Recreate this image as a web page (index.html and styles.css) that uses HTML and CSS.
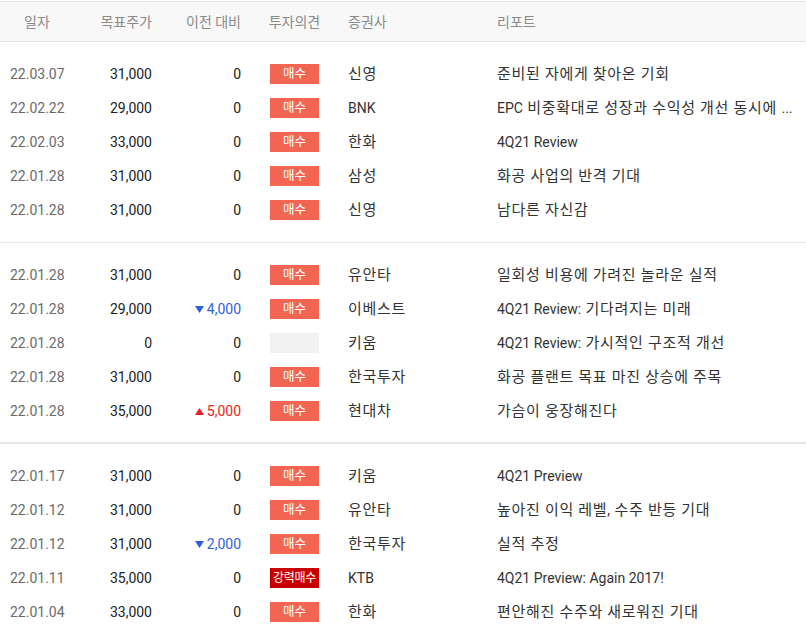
FILE: index.html
```html
<!DOCTYPE html>
<html lang="ko">
<head>
<meta charset="utf-8">
<title>리포트</title>
<link rel="stylesheet" href="styles.css">
</head>
<body>
<div class="table">
  <div class="head row">
    <div class="c date">일자</div>
    <div class="c num">목표주가</div>
    <div class="c num">이전 대비</div>
    <div class="c op"><span class="op-h">투자의견</span></div>
    <div class="c broker">증권사</div>
    <div class="c report">리포트</div>
  </div>

  <div class="group">
    <div class="row"><div class="c date">22.03.07</div><div class="c num">31,000</div><div class="c num">0</div><div class="c op"><span class="badge">매수</span></div><div class="c broker">신영</div><div class="c report">준비된 자에게 찾아온 기회</div></div>
    <div class="row"><div class="c date">22.02.22</div><div class="c num">29,000</div><div class="c num">0</div><div class="c op"><span class="badge">매수</span></div><div class="c broker"><span class="en">BNK</span></div><div class="c report"><span class="en">EPC</span> 비중확대로 성장과 수익성 개선 동시에 <span class="en">...</span></div></div>
    <div class="row"><div class="c date">22.02.03</div><div class="c num">33,000</div><div class="c num">0</div><div class="c op"><span class="badge">매수</span></div><div class="c broker">한화</div><div class="c report"><span class="en">4Q21 Review</span></div></div>
    <div class="row"><div class="c date">22.01.28</div><div class="c num">31,000</div><div class="c num">0</div><div class="c op"><span class="badge">매수</span></div><div class="c broker">삼성</div><div class="c report">화공 사업의 반격 기대</div></div>
    <div class="row"><div class="c date">22.01.28</div><div class="c num">31,000</div><div class="c num">0</div><div class="c op"><span class="badge">매수</span></div><div class="c broker">신영</div><div class="c report">남다른 자신감</div></div>
  </div>

  <div class="group group-b">
    <div class="row"><div class="c date">22.01.28</div><div class="c num">31,000</div><div class="c num">0</div><div class="c op"><span class="badge">매수</span></div><div class="c broker">유안타</div><div class="c report">일회성 비용에 가려진 놀라운 실적</div></div>
    <div class="row"><div class="c date">22.01.28</div><div class="c num">29,000</div><div class="c num down"><svg class="tri" viewBox="0 0 9 7" width="9" height="7"><path d="M0 0H9L4.5 7Z" fill="#2f5fd6"/></svg>4,000</div><div class="c op"><span class="badge">매수</span></div><div class="c broker">이베스트</div><div class="c report"><span class="en">4Q21 Review:</span> 기다려지는 미래</div></div>
    <div class="row"><div class="c date">22.01.28</div><div class="c num">0</div><div class="c num">0</div><div class="c op"><span class="badge empty"></span></div><div class="c broker">키움</div><div class="c report"><span class="en">4Q21 Review:</span> 가시적인 구조적 개선</div></div>
    <div class="row"><div class="c date">22.01.28</div><div class="c num">31,000</div><div class="c num">0</div><div class="c op"><span class="badge">매수</span></div><div class="c broker">한국투자</div><div class="c report">화공 플랜트 목표 마진 상승에 주목</div></div>
    <div class="row"><div class="c date">22.01.28</div><div class="c num">35,000</div><div class="c num up"><svg class="tri" viewBox="0 0 9 7" width="9" height="7"><path d="M4.5 0L9 7H0Z" fill="#ee1c25"/></svg>5,000</div><div class="c op"><span class="badge">매수</span></div><div class="c broker">현대차</div><div class="c report">가슴이 웅장해진다</div></div>
  </div>

  <div class="group group-c">
    <div class="row"><div class="c date">22.01.17</div><div class="c num">31,000</div><div class="c num">0</div><div class="c op"><span class="badge">매수</span></div><div class="c broker">키움</div><div class="c report"><span class="en">4Q21 Preview</span></div></div>
    <div class="row"><div class="c date">22.01.12</div><div class="c num">31,000</div><div class="c num">0</div><div class="c op"><span class="badge">매수</span></div><div class="c broker">유안타</div><div class="c report">높아진 이익 레벨<span class="en">,</span> 수주 반등 기대</div></div>
    <div class="row"><div class="c date">22.01.12</div><div class="c num">31,000</div><div class="c num down"><svg class="tri" viewBox="0 0 9 7" width="9" height="7"><path d="M0 0H9L4.5 7Z" fill="#2f5fd6"/></svg>2,000</div><div class="c op"><span class="badge">매수</span></div><div class="c broker">한국투자</div><div class="c report">실적 추정</div></div>
    <div class="row"><div class="c date">22.01.11</div><div class="c num">35,000</div><div class="c num">0</div><div class="c op"><span class="badge strong">강력매수</span></div><div class="c broker"><span class="en">KTB</span></div><div class="c report"><span class="en">4Q21 Preview: Again 2017!</span></div></div>
    <div class="row"><div class="c date">22.01.04</div><div class="c num">33,000</div><div class="c num">0</div><div class="c op"><span class="badge">매수</span></div><div class="c broker">한화</div><div class="c report">편안해진 수주와 새로워진 기대</div></div>
  </div>
</div>
</body>
</html>
```

FILE: styles.css
```css
html, body {
  margin: 0;
  padding: 0;
  background: #fff;
}
body {
  font-family: Roboto, "Noto Sans CJK KR", sans-serif;
  font-size: 14px;
  color: #222;
  padding-top: 1px;
}
.table {
  width: 806px;
}
.row {
  display: grid;
  grid-template-columns: 54px 88px 89px 107px 149px 1fr;
  align-items: center;
  height: 34px;
  padding-left: 10px;
  padding-right: 12px;
}
.head {
  height: 39px;
  background: #f8f8f8;
  border-top: 1px solid #e6e6e6;
  border-bottom: 1px solid #e3e3e3;
  color: #8a8a8a;
}
.c {
  white-space: nowrap;
  line-height: 20px;
}
.head .date {
  text-align: center;
}
.num {
  text-align: right;
}
.op {
  padding-left: 29px;
  display: flex;
}
.op-h {
  width: 49px;
  display: flex;
  justify-content: center;
}
.broker {
  color: #333;
}
.report {
  color: #333;
  overflow: hidden;
  text-overflow: ellipsis;
}
.row .broker, .row .report {
  font-size: 15px;
  letter-spacing: 0.7px;
}
.row .broker .en, .row .report .en {
  font-size: 14px;
  letter-spacing: 0;
}
.head .broker, .head .report {
  font-size: 14px;
  letter-spacing: 0;
}
.row .date {
  color: #6b6b6b;
}
.head .date, .head .num, .head .broker, .head .report {
  color: #8a8a8a;
}
.group {
  padding: 15px 0 15px;
  border-bottom: 1px solid #e8e8e8;
}
.group-b {
  padding-bottom: 14px;
  border-bottom: 2px solid #e6e6ea;
}
.group-c {
  border-bottom: none;
}
.badge {
  display: inline-flex;
  align-items: center;
  justify-content: center;
  width: 49px;
  height: 20px;
  background: #f26553;
  color: #fff;
  font-size: 12.5px;
  line-height: 20px;
}
.badge.empty {
  background: #f1f1f1;
}
.badge.strong {
  background: #c70000;
  font-size: 12px;
  letter-spacing: -0.3px;
}
.down {
  color: #2f5fd6;
}
.up {
  color: #ee1c25;
}
.tri {
  display: inline-block;
  margin-right: 3px;
  vertical-align: 1px;
}
```
